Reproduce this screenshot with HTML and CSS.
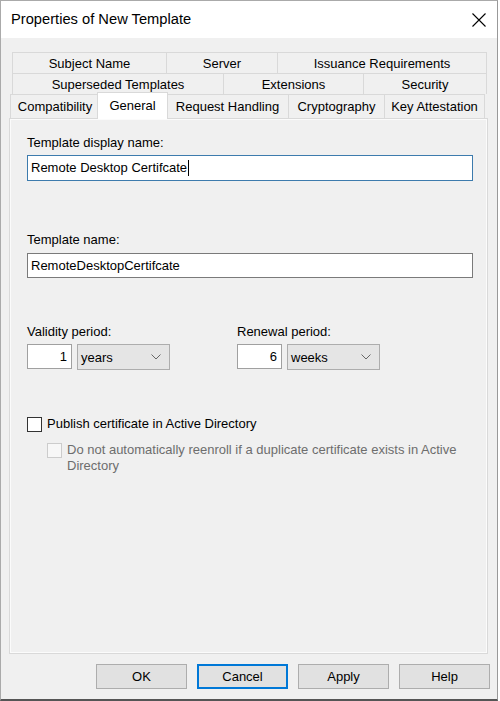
FILE: index.html
```html
<!DOCTYPE html>
<html lang="en">
	<head>
		<meta charset="utf-8">
		<title>Properties of New Template</title>
		<link rel="stylesheet" href="styles.css">
	</head>
	<body>
		<div class="window">
			<div class="titlebar">
				<span class="title">Properties of New Template</span>
				<svg class="close" width="14" height="14" viewBox="0 0 14 14">
					<path d="M0.5 0.5 L13.5 13.5 M13.5 0.5 L0.5 13.5" stroke="#000" stroke-width="1.1" fill="none"/>
				</svg>
			</div>

			<div class="content">
				<div class="tabs">
					<div class="tab-row row1">
						<div class="tab">Subject Name</div>
						<div class="tab">Server</div>
						<div class="tab">Issuance Requirements</div>
					</div>
					<div class="tab-row row2">
						<div class="tab">Superseded Templates</div>
						<div class="tab">Extensions</div>
						<div class="tab">Security</div>
					</div>
					<div class="tab-row row3">
						<div class="tab">Compatibility</div>
						<div class="tab active">General</div>
						<div class="tab">Request Handling</div>
						<div class="tab">Cryptography</div>
						<div class="tab">Key Attestation</div>
					</div>
				</div>

				<div class="panel">
					<div class="label">Template display name:</div>
					<div class="field focused"><span>Remote Desktop Certifcate</span><span class="caret"></span></div>

					<div class="label second">Template name:</div>
					<div class="field"><span>RemoteDesktopCertifcate</span></div>

					<div class="periods">
						<div class="period">
							<div class="label">Validity period:</div>
							<div class="period-inputs">
								<div class="number">1</div>
								<div class="combo"><span>years</span><svg class="chevron" width="10" height="6" viewBox="0 0 10 6"><path d="M0.5 0.5 L5 5 L9.5 0.5" stroke="#666" fill="none"/></svg></div>
							</div>
						</div>
						<div class="period">
							<div class="label">Renewal period:</div>
							<div class="period-inputs">
								<div class="number">6</div>
								<div class="combo"><span>weeks</span><svg class="chevron" width="10" height="6" viewBox="0 0 10 6"><path d="M0.5 0.5 L5 5 L9.5 0.5" stroke="#666" fill="none"/></svg></div>
							</div>
						</div>
					</div>

					<div class="check">
						<span class="box"></span>
						<span>Publish certificate in Active Directory</span>
					</div>
					<div class="check sub disabled">
						<span class="box"></span>
						<span class="check-text">Do not automatically reenroll if a duplicate certificate exists in Active Directory</span>
					</div>
				</div>

				<div class="buttons">
					<div class="button">OK</div>
					<div class="button default">Cancel</div>
					<div class="button">Apply</div>
					<div class="button">Help</div>
				</div>
			</div>
		</div>
	</body>
</html>
```

FILE: styles.css
```css
body {
	margin: 0;
	background-color: #fff;
	font-family: "Liberation Sans", Arial, sans-serif;
	font-size: 13px;
	color: #000;
}

.window {
	box-sizing: border-box;
	width: 498px;
	height: 701px;
	background-color: #f0f0f0;
	border: 1px solid #aaa;
	border-right-color: #999;
	border-bottom: 2px solid #555;
	display: flex;
	flex-direction: column;
}

/* title bar */
.titlebar {
	height: 37px;
	background-color: #fff;
	display: flex;
	align-items: center;
	justify-content: space-between;
	padding: 0 11px 0 10px;
}
.title {
	font-size: 14.7px;
	margin-top: -1px;
}
.close {
	margin-top: 1px;
}

.content {
	padding: 14px 9px 0 8px;
}

/* tab strip, three rows */
.tab-row {
	display: grid;
	width: 475px;
}
.row1 {
	grid-template-columns: 154px 111px 1fr;
	height: 21px;
	margin-left: 3px;
}
.row2 {
	grid-template-columns: 211px 140px 1fr;
	height: 21px;
	margin-left: 3px;
}
.row3 {
	grid-template-columns: 89px 67px 122px 96px 1fr;
	height: 24px;
	margin-left: 1px;
}
.tab {
	border-top: 1px solid #d9d9d9;
	border-left: 1px solid #d9d9d9;
	display: flex;
	align-items: center;
	justify-content: center;
	white-space: nowrap;
}
.tab:last-child {
	border-right: 1px solid #d9d9d9;
}
.tab.active {
	position: relative;
	z-index: 1;
	background-color: #fff;
	margin: -2px -2px -1px -2px;
	border-right: 1px solid #d9d9d9;
	padding-bottom: 2px;
}

/* page under the tabs */
.panel {
	box-sizing: border-box;
	height: 536px;
	border: 1px solid #d9d9d9;
	box-shadow: inset 0 0 0 1px #fbfbfb;
	padding: 16px 14px 0 17px;
}
.label {
	line-height: 16px;
	margin-bottom: 4px;
}
.label.second {
	margin-top: 51px;
	margin-bottom: 5px;
}
.field {
	box-sizing: border-box;
	height: 26px;
	background-color: #fff;
	border: 1px solid #7a7a7a;
	padding-left: 3px;
	line-height: 24px;
	display: flex;
	align-items: center;
}
.field + .label.second + .field {
	height: 25px;
}
.field.focused {
	border-color: #3d7bad;
}
.caret {
	display: inline-block;
	width: 1px;
	height: 16px;
	background-color: #000;
	margin-left: 1px;
}

.periods {
	display: grid;
	grid-template-columns: 210px auto;
	margin-top: 46px;
}
.period-inputs {
	display: flex;
	gap: 5px;
}
.number {
	box-sizing: border-box;
	width: 45px;
	height: 25px;
	background-color: #fff;
	border: 1px solid #a0a0a0;
	text-align: right;
	padding-right: 4px;
	line-height: 23px;
}
.combo {
	box-sizing: border-box;
	width: 93px;
	height: 26px;
	background-color: #e5e5e5;
	border: 1px solid #adadad;
	display: flex;
	align-items: center;
	justify-content: space-between;
	padding: 0 8px 0 3px;
}

/* check boxes */
.check {
	display: flex;
	align-items: flex-start;
	gap: 5px;
	margin-top: 46px;
	line-height: 16px;
}
.box {
	box-sizing: border-box;
	flex: none;
	width: 15px;
	height: 15px;
	background-color: #fff;
	border: 1px solid #333;
	margin-top: 1px;
}
.check.sub {
	margin-top: 10px;
	margin-left: 20px;
}
.check.disabled {
	color: #6d6d6d;
}
.check.disabled .box {
	border-color: #ccc;
	background-color: #f7f7f7;
}
.check-text {
	width: 400px;
}

/* dialog buttons */
.buttons {
	display: flex;
	justify-content: flex-end;
	gap: 10px;
	margin-top: 10px;
	margin-right: -2px;
}
.button {
	box-sizing: border-box;
	width: 91px;
	height: 25px;
	background-color: #e1e1e1;
	border: 1px solid #adadad;
	display: flex;
	align-items: center;
	justify-content: center;
}
.button.default {
	border-color: #0078d7;
	box-shadow: inset 0 0 0 1px #0078d7;
}
```
